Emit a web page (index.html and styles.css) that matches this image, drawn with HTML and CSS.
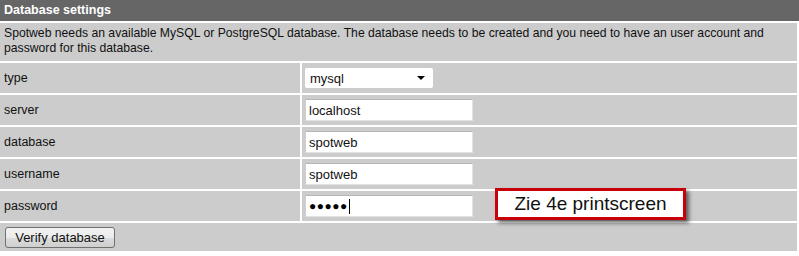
FILE: index.html
```html
<!DOCTYPE html>
<html>
<head>
<meta charset="utf-8">
<link rel="stylesheet" href="styles.css">
</head>
<body>
<div class="page">
  <div class="header">Database settings</div>
  <div class="grid">
    <div class="cell desc">Spotweb needs an available MySQL or PostgreSQL database. The database needs to be created and you need to have an user account and password for this database.</div>
    <div class="cell label">type</div>
    <div class="cell field">
      <div class="select"><span>mysql</span><span class="arrow"></span></div>
    </div>
    <div class="cell label">server</div>
    <div class="cell field"><div class="input">localhost</div></div>
    <div class="cell label">database</div>
    <div class="cell field"><div class="input">spotweb</div></div>
    <div class="cell label">username</div>
    <div class="cell field"><div class="input">spotweb</div></div>
    <div class="cell label">password</div>
    <div class="cell field"><div class="input pw">●●●●●<span class="caret"></span></div></div>
    <div class="cell buttonrow"><div class="btn">Verify database</div></div>
  </div>
  <div class="callout">Zie 4e printscreen</div>
</div>
</body>
</html>
```
FILE: styles.css
```css
html, body {
  margin: 0;
  padding: 0;
  background: #fff;
}
.page {
  position: relative;
  width: 799px;
  height: 256px;
  font-family: "Liberation Sans", Arial, sans-serif;
  font-size: 12.2px;
  color: #111;
}
.header {
  background: #666;
  color: #fff;
  font-weight: bold;
  font-size: 12.5px;
  height: 21px;
  line-height: 21px;
  padding-left: 4px;
}
.grid {
  display: grid;
  grid-template-columns: 300px 495px;
  grid-template-rows: 38px;
  grid-auto-rows: 30px;
  gap: 2px;
  padding-top: 2px;
}
.cell {
  background: #cccccc;
  display: flex;
  align-items: center;
}
.desc {
  grid-column: 1 / 3;
  display: block;
  padding: 3px 4px 0 4px;
  line-height: 15px;
  box-sizing: border-box;
}
.label {
  padding-left: 4px;
  font-size: 12.5px;
}
.field {
  padding-left: 3px;
}
.select {
  width: 128px;
  height: 20px;
  box-sizing: border-box;
  background: #fff;
  display: flex;
  align-items: center;
  justify-content: space-between;
  padding: 0 8px 0 5px;
  font-size: 13px;
  border-radius: 2px;
}
.arrow {
  width: 0;
  height: 0;
  border-left: 4px solid transparent;
  border-right: 4px solid transparent;
  border-top: 4px solid #000;
}
.input {
  width: 168px;
  height: 22px;
  box-sizing: border-box;
  background: #fff;
  border: 1px solid #e2e2e2;
  border-top-color: #b5b5b5;
  border-left-color: #cfcfcf;
  padding-left: 3px;
  display: flex;
  align-items: center;
  font-size: 13px;
  color: #111;
}
.input.pw {
  font-size: 12px;
  letter-spacing: 0.5px;
  color: #000;
}
.caret {
  display: inline-block;
  width: 1px;
  height: 15px;
  background: #000;
  margin-left: 1px;
}
.buttonrow {
  grid-column: 1 / 3;
  padding-left: 5px;
  height: 28px;
}
.btn {
  width: 110px;
  height: 21px;
  box-sizing: border-box;
  border: 1px solid #707070;
  border-radius: 3px;
  background: linear-gradient(#f2f2f2, #ebebeb 50%, #dddddd 51%, #cfcfcf);
  display: flex;
  align-items: center;
  justify-content: center;
  font-size: 13px;
  color: #111;
}
.callout {
  position: absolute;
  left: 495px;
  top: 188px;
  width: 191px;
  height: 32px;
  box-sizing: border-box;
  border: 3px solid #c8000a;
  background: #fff;
  font-size: 19px;
  color: #111;
  display: flex;
  align-items: center;
  justify-content: center;
  box-shadow: 3px 3px 4px rgba(0,0,0,0.55);
}
```
